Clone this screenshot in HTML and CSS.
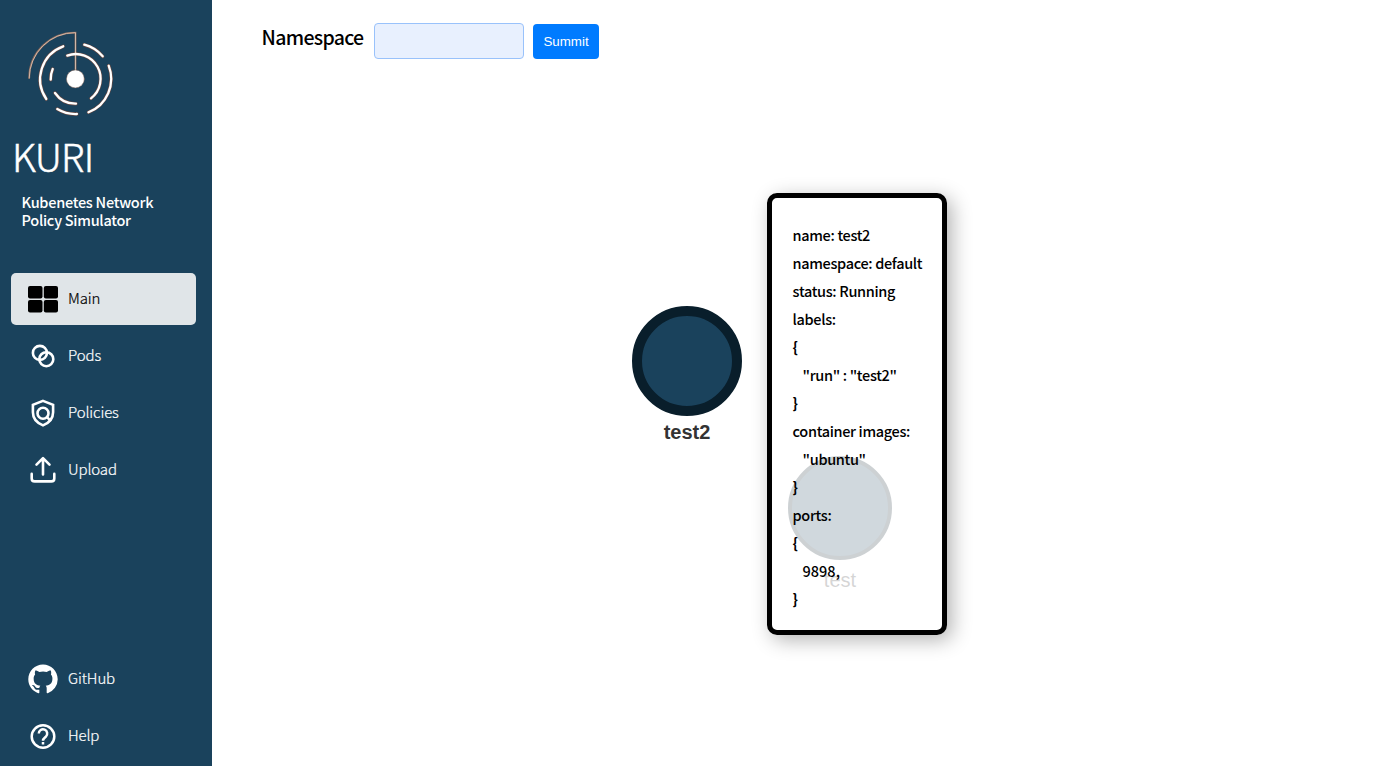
FILE: index.html
```
<!DOCTYPE html>
<html lang="en">
<head>
<meta charset="utf-8">
<title>KURI</title>
<link rel="stylesheet" href="styles.css">
</head>
<body>
<div class="app">
  <aside class="sidebar">
    <svg class="logo" viewBox="20 25 100 100" fill="none" stroke-linecap="round">
      <defs>
        <g id="rings">
          <path d="M63.2 46.3A35 35 0 0 0 46.3 99"/>
          <path d="M67.3 55.6A24.7 24.7 0 0 1 91 98.3"/>
          <path d="M52.7 69A25 25 0 0 0 50.7 79.7"/>
          <path d="M55 93A24.8 24.8 0 0 0 76 103.7"/>
          <path d="M84.3 44.7A36 36 0 0 1 102.7 56.3"/>
          <path d="M108.7 65.7A36 36 0 0 1 88.5 112.3"/>
          <path d="M57.3 109A35.5 35.5 0 0 0 76.9 114"/>
        </g>
      </defs>
      <use href="#rings" stroke="#6b4a42" stroke-width="3.5"/>
      <path d="M29.2 78A46 45.4 0 0 1 75.5 32.6V70" stroke="#86675a" stroke-width="1.9"/>
      <path d="M29.2 78A46 45.4 0 0 1 75.5 32.6V70" stroke="#e5cbbb" stroke-width=".8"/>
      <use href="#rings" stroke="#fff" stroke-width="2.3"/>
      <circle cx="75.4" cy="78.9" r="9" fill="#fff" stroke="#76564a" stroke-width=".5"/>
    </svg>
    <h1 class="brand">KURI</h1>
    <p class="tagline">Kubenetes Network<br>Policy Simulator</p>
    <nav class="menu">
      <a class="item active">
        <svg class="icon" viewBox="0 0 32 32"><g fill="#000"><rect x="1" y="3" width="14.5" height="12.5" rx="2"/><rect x="16.8" y="3" width="14.2" height="12.5" rx="2"/><rect x="1" y="16.9" width="14.5" height="12.5" rx="2"/><rect x="16.8" y="16.9" width="14.2" height="12.5" rx="2"/></g></svg>
        <span>Main</span>
      </a>
      <a class="item">
        <svg class="icon" viewBox="0 0 32 32" fill="none" stroke="#fff" stroke-width="2.6"><circle cx="12.9" cy="12.9" r="7"/><circle cx="19.3" cy="19.2" r="7"/></svg>
        <span>Pods</span>
      </a>
      <a class="item">
        <svg class="icon" viewBox="0 0 32 32" fill="none" stroke="#fff" stroke-width="2.6"><path d="M16 3.9 26.1 7.8V15.2C26.1 21.5 22 25.9 16 28.4 10 25.9 5.9 21.5 5.9 15.2V7.8Z"/><circle cx="16" cy="16.2" r="5.5"/><path d="m19.7 19.9 4.1 4"/></svg>
        <span>Policies</span>
      </a>
      <a class="item">
        <svg class="icon" viewBox="0 0 32 32" fill="none" stroke="#fff" stroke-width="2.6" stroke-linecap="round" stroke-linejoin="round"><path d="M16 20.5V4.2M9.5 10.7 16 4.2l6.5 6.5M4.7 19.9v4.5q0 3 3 3h16.6q3 0 3-3v-4.5"/></svg>
        <span>Upload</span>
      </a>
    </nav>
    <nav class="menu links">
      <a class="item">
        <svg class="icon" viewBox="-.7 -.8 17.4 17.4"><path fill="#fff" d="M8 0C3.58 0 0 3.58 0 8c0 3.54 2.29 6.53 5.47 7.59.4.07.55-.17.55-.38 0-.19-.01-.82-.01-1.49-2.01.37-2.53-.49-2.69-.94-.09-.23-.48-.94-.82-1.13-.28-.15-.68-.52-.01-.53.63-.01 1.08.58 1.23.82.72 1.21 1.87.87 2.33.66.07-.52.28-.87.51-1.07-1.78-.2-3.64-.89-3.64-3.95 0-.87.31-1.59.82-2.15-.08-.2-.36-1.02.08-2.12 0 0 .67-.21 2.2.82.64-.18 1.32-.27 2-.27s1.36.09 2 .27c1.53-1.04 2.2-.82 2.2-.82.44 1.1.16 1.92.08 2.12.51.56.82 1.27.82 2.15 0 3.07-1.87 3.75-3.65 3.95.29.25.54.73.54 1.48 0 1.07-.01 1.93-.01 2.2 0 .21.15.46.55.38A8.01 8.01 0 0 0 16 8c0-4.42-3.58-8-8-8Z"/></svg>
        <span>GitHub</span>
      </a>
      <a class="item">
        <svg class="icon" viewBox="0 0 32 32" fill="none" stroke="#fff" stroke-width="2.5"><circle cx="16" cy="16.5" r="11.3"/><path d="M11.8 13.6a4.2 4.2 0 1 1 7.1 3c-1.5 1.4-2.9 1.9-2.9 4.1M16 22v2.5"/></svg>
        <span>Help</span>
      </a>
    </nav>
  </aside>
  <main class="main">
    <form class="filter">
      <label class="filter-label" for="ns">Namespace</label>
      <input class="filter-input" id="ns" type="text">
      <button class="filter-button" type="button">Summit</button>
    </form>
    <div class="node node-selected"><div class="disc"></div><div class="node-name">test2</div></div>
    <div class="node node-faded"><div class="disc"></div><div class="node-name">test</div></div>
    <section class="details">
      <div>name: test2</div>
      <div>namespace: default</div>
      <div>status: Running</div>
      <div>labels:</div>
      <div class="brace">{</div>
      <div class="indent">"run" : "test2"</div>
      <div class="brace">}</div>
      <div>container images:</div>
      <div class="indent">"ubuntu"</div>
      <div class="brace">}</div>
      <div>ports:</div>
      <div class="brace">{</div>
      <div class="indent number">9898,</div>
      <div class="brace">}</div>
    </section>
  </main>
</div>
</body>
</html>
```
FILE: styles.css
```
* { box-sizing: border-box; }
body { margin: 0; background: #fff; color: #000; font-family: "Noto Sans CJK KR", "Noto Sans", sans-serif; overflow: hidden; }
.app { display: flex; height: 766px; }
.sidebar { width: 211.6px; flex: none; background: #1a425c; color: #fff; display: flex; flex-direction: column; padding: 25px 16px 4px 11px; }
.logo { width: 100px; height: 100px; margin-left: 9px; flex: none; }
.brand { margin: 5px 0 0 1px; font-size: 38.5px; line-height: 50px; font-weight: 300; letter-spacing: -.8px; -webkit-text-stroke: .5px #fff; }
.tagline { margin: 13px 0 0 10.5px; font-size: 14.5px; line-height: 18px; font-weight: 500; letter-spacing: -.27px; white-space: nowrap; }
.menu { display: flex; flex-direction: column; gap: 5px; margin-top: 44px; }
.links { margin-top: auto; }
.item { display: flex; align-items: center; height: 52px; padding-left: 16px; border-radius: 5px; font-size: 15px; font-weight: 300; letter-spacing: -.12px; -webkit-text-stroke: .2px currentColor; }
.item span { margin-left: 9px; padding-bottom: 3px; }
.active { background: #e0e5e8; color: #000; }
.icon { width: 32px; height: 32px; flex: none; }
.main { flex: 1; position: relative; padding: 23px 0 0 50px; }
.filter { display: flex; align-items: flex-start; }
.filter-label { width: 112px; font-size: 19.5px; line-height: 27px; font-weight: 500; letter-spacing: -.7px; white-space: nowrap; }
.filter-input { width: 150px; height: 36px; border: 1px solid #99c2fb; border-radius: 4px; background: #e8f0fe; }
.filter-button { width: 65.5px; height: 35.5px; margin: .5px 0 0 9.7px; padding: 0; border: 0; border-radius: 4px; background: #007bff; color: #fff; font: 13.33px "Liberation Sans", sans-serif; }
.node { position: absolute; display: flex; flex-direction: column; align-items: center; font-family: "Liberation Sans", sans-serif; font-size: 20px; line-height: 24px; color: #333; }
.disc { border-radius: 50%; background: #1a425c; border: solid #091e2b; }
.node-selected { left: 420.4px; top: 305.5px; font-weight: 700; }
.node-selected .disc { width: 110px; height: 110px; border-width: 10px; }
.node-selected .node-name { margin-top: 4px; }
.node-faded { left: 576.4px; top: 456px; opacity: .2; }
.node-faded .disc { width: 104px; height: 104px; border-width: 4px; }
.node-faded .node-name { margin-top: 8px; }
.details { position: absolute; left: 555.6px; top: 193px; width: 180px; height: 442px; padding: 23px 20.4px; border: 5px solid #000; border-radius: 10px; box-shadow: 5px 5px 20px rgba(0,0,0,.3); font-size: 14.5px; line-height: 28px; font-weight: 500; letter-spacing: -.34px; white-space: nowrap; }
.indent { padding-left: 10px; }
.number { letter-spacing: 0; }
.brace { font-weight: 700; }
```
